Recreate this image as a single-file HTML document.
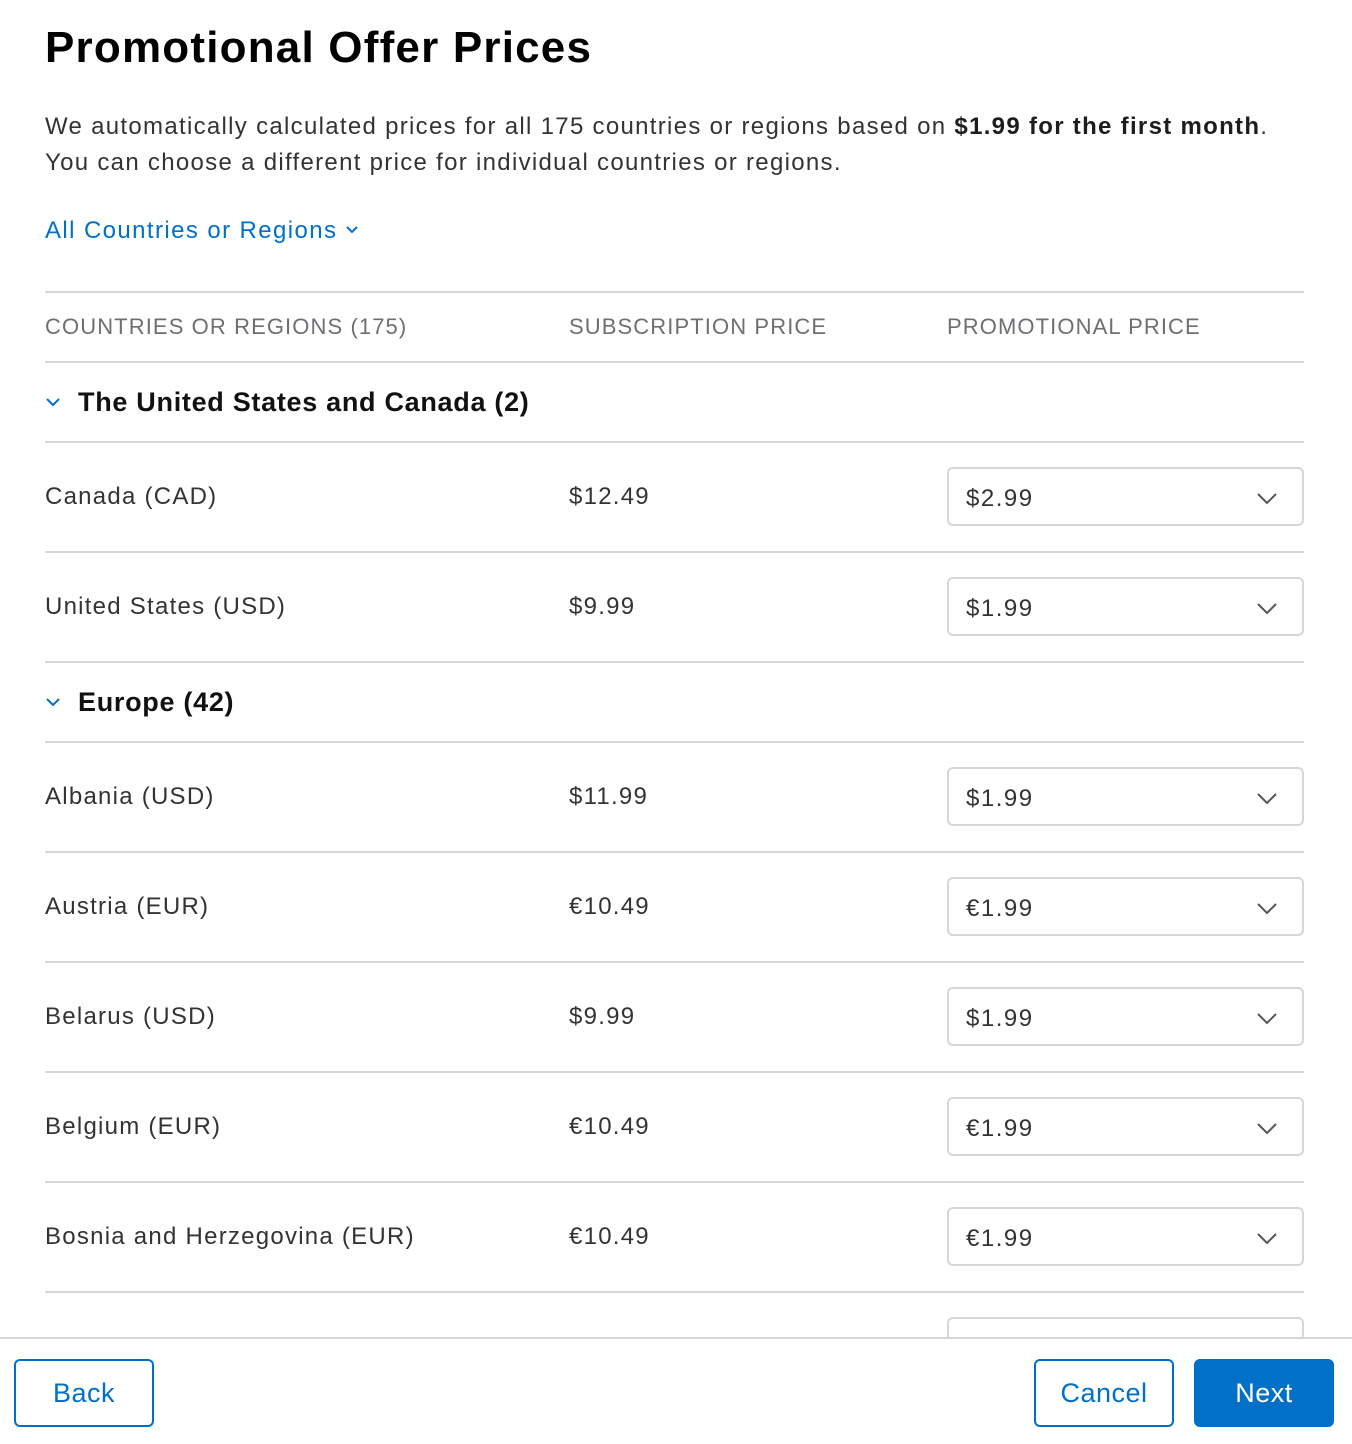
<!DOCTYPE html>
<html><head><meta charset="utf-8"><style>
*{margin:0;padding:0;box-sizing:border-box}
body{width:1352px;height:1444px;position:relative;overflow:hidden;background:#fff;font-family:"Liberation Sans",sans-serif;color:#1d1d1f}
.a{position:absolute;white-space:nowrap}
.line{position:absolute;left:45px;width:1259px;height:2px;background:#d6d6d6}
.t{font-size:24px;color:#333;line-height:30px;letter-spacing:1.25px}
.sel{position:absolute;left:947px;width:357px;height:59px;border:2px solid #d6d6d6;border-radius:6px;font-size:24px;color:#333;padding-left:17px;line-height:59px;letter-spacing:1.5px}
.sel svg{position:absolute;right:24px;top:22px}
.g{font-size:27px;font-weight:bold;color:#111;line-height:32px;letter-spacing:0.7px}
.btn{position:absolute;top:1359px;height:68px;border:2px solid #0070c9;border-radius:6px;font-size:27px;color:#0070c9;text-align:center;line-height:64px;letter-spacing:0.5px}
.h{font-size:22px;color:#6e6e73;letter-spacing:1.1px;line-height:26px}
</style></head><body>
<div class="a" style="left:45px;top:22px;font-size:44px;font-weight:bold;color:#000;line-height:52px;letter-spacing:1.2px">Promotional Offer Prices</div>
<div class="a t" style="left:45px;top:112px;color:#333;letter-spacing:1.3px">We automatically calculated prices for all 175 countries or regions based on <b style="color:#1d1d1f">$1.99 for the first month</b>.</div>
<div class="a t" style="left:45px;top:148px;letter-spacing:1.3px">You can choose a different price for individual countries or regions.</div>
<div class="a" style="left:45px;top:216px;font-size:24px;color:#0070c9;line-height:30px;letter-spacing:1.4px">All Countries or Regions <svg width="14" height="10" viewBox="0 0 14 10" style="vertical-align:3px"><path d="M2 2l5 5 5-5" fill="none" stroke="#0070c9" stroke-width="2"/></svg></div>
<div class="line" style="top:291px"></div>
<div class="a h" style="left:45px;top:314px">COUNTRIES OR REGIONS (175)</div>
<div class="a h" style="left:569px;top:314px">SUBSCRIPTION PRICE</div>
<div class="a h" style="left:947px;top:314px">PROMOTIONAL PRICE</div>
<div class="line" style="top:361px"></div>

<svg class="a" style="left:45px;top:396px" width="16" height="12" viewBox="0 0 16 12"><path d="M2 3l6 6 6-6" fill="none" stroke="#0070c9" stroke-width="2"/></svg>
<div class="a g" style="left:78px;top:386px">The United States and Canada (2)</div>
<div class="line" style="top:441px"></div>

<div class="a t" style="left:45px;top:482px">Canada (CAD)</div><div class="a t" style="left:569px;top:482px">$12.49</div>
<div class="sel" style="top:467px">$2.99<svg width="22" height="14" viewBox="0 0 22 14"><path d="M2 3l9 9 9-9" fill="none" stroke="#555" stroke-width="2"/></svg></div>
<div class="line" style="top:551px"></div>

<div class="a t" style="left:45px;top:592px">United States (USD)</div><div class="a t" style="left:569px;top:592px">$9.99</div>
<div class="sel" style="top:577px">$1.99<svg width="22" height="14" viewBox="0 0 22 14"><path d="M2 3l9 9 9-9" fill="none" stroke="#555" stroke-width="2"/></svg></div>
<div class="line" style="top:661px"></div>

<svg class="a" style="left:45px;top:696px" width="16" height="12" viewBox="0 0 16 12"><path d="M2 3l6 6 6-6" fill="none" stroke="#0070c9" stroke-width="2"/></svg>
<div class="a g" style="left:78px;top:686px">Europe (42)</div>
<div class="line" style="top:741px"></div>

<div class="a t" style="left:45px;top:782px">Albania (USD)</div><div class="a t" style="left:569px;top:782px">$11.99</div>
<div class="sel" style="top:767px">$1.99<svg width="22" height="14" viewBox="0 0 22 14"><path d="M2 3l9 9 9-9" fill="none" stroke="#555" stroke-width="2"/></svg></div>
<div class="line" style="top:851px"></div>

<div class="a t" style="left:45px;top:892px">Austria (EUR)</div><div class="a t" style="left:569px;top:892px">€10.49</div>
<div class="sel" style="top:877px">€1.99<svg width="22" height="14" viewBox="0 0 22 14"><path d="M2 3l9 9 9-9" fill="none" stroke="#555" stroke-width="2"/></svg></div>
<div class="line" style="top:961px"></div>

<div class="a t" style="left:45px;top:1002px">Belarus (USD)</div><div class="a t" style="left:569px;top:1002px">$9.99</div>
<div class="sel" style="top:987px">$1.99<svg width="22" height="14" viewBox="0 0 22 14"><path d="M2 3l9 9 9-9" fill="none" stroke="#555" stroke-width="2"/></svg></div>
<div class="line" style="top:1071px"></div>

<div class="a t" style="left:45px;top:1112px">Belgium (EUR)</div><div class="a t" style="left:569px;top:1112px">€10.49</div>
<div class="sel" style="top:1097px">€1.99<svg width="22" height="14" viewBox="0 0 22 14"><path d="M2 3l9 9 9-9" fill="none" stroke="#555" stroke-width="2"/></svg></div>
<div class="line" style="top:1181px"></div>

<div class="a t" style="left:45px;top:1222px">Bosnia and Herzegovina (EUR)</div><div class="a t" style="left:569px;top:1222px">€10.49</div>
<div class="sel" style="top:1207px">€1.99<svg width="22" height="14" viewBox="0 0 22 14"><path d="M2 3l9 9 9-9" fill="none" stroke="#555" stroke-width="2"/></svg></div>
<div class="line" style="top:1291px"></div>
<div class="sel" style="top:1317px;height:40px"></div>

<div class="a" style="left:0;top:1337px;width:1352px;height:107px;background:#fff;border-top:2px solid #d6d6d6"></div>
<div class="btn" style="left:14px;width:140px">Back</div>
<div class="btn" style="left:1034px;width:140px">Cancel</div>
<div class="btn" style="left:1194px;width:140px;background:#0070c9;color:#fff">Next</div>
</body></html>
